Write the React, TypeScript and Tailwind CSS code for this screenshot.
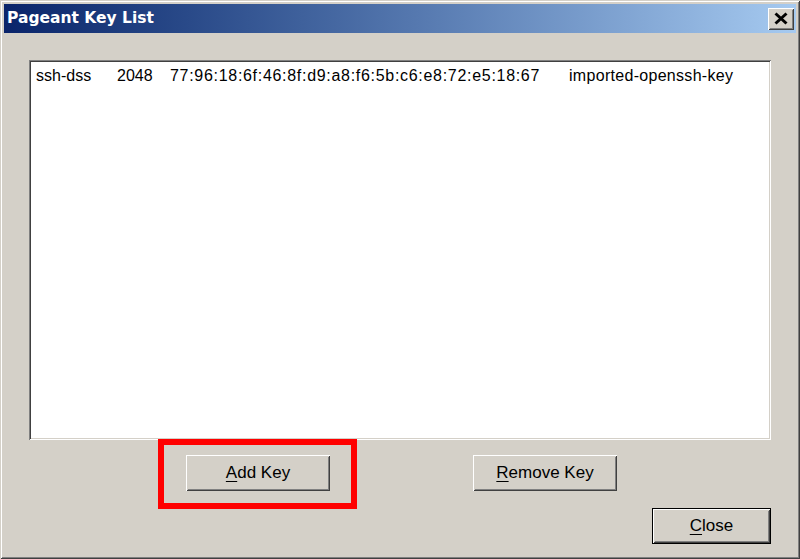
import React from 'react';

const face = '#d4d0c8';

// raised Win2000 bevel
const raised =
  'shadow-[inset_1px_1px_0_#ffffff,inset_-1px_-1px_0_#404040,inset_2px_2px_0_#d4d0c8,inset_-2px_-2px_0_#808080]';

const Btn: React.FC<{ label: string; hot: number; w: string; isDefault?: boolean }> = ({ label, hot, w, isDefault }) => (
  <button
    className={`${w} h-[36px] bg-[#d4d0c8] text-black text-[17px] flex items-center justify-center ${
      isDefault ? 'border border-black' : ''
    }`}
  >
    <span className={`w-full h-full flex items-center justify-center ${raised}`}>
      <span>
        {label.slice(0, hot)}
        <span className="underline underline-offset-[3px] decoration-1">{label[hot]}</span>
        {label.slice(hot + 1)}
      </span>
    </span>
  </button>
);

const App: React.FC = () => {
  return (
    <div
      className="w-[800px] h-[559px] bg-[#d4d0c8] flex flex-col p-[4px] shadow-[inset_1px_1px_0_#d4d0c8,inset_-1px_-1px_0_#404040,inset_2px_2px_0_#ffffff,inset_-2px_-2px_0_#808080] overflow-hidden"
      style={{ fontFamily: '"Liberation Sans", Arial, sans-serif', backgroundColor: face }}
    >
      {/* Title bar */}
      <div className="h-[29px] flex items-center justify-between pl-[3px] pr-[2px] bg-gradient-to-r from-[#0a246a] to-[#a6caf0]">
        <span
          className="text-white font-bold text-[15.5px] leading-none"
          style={{ fontFamily: '"DejaVu Sans", Verdana, sans-serif' }}
        >
          Pageant Key List
        </span>
        <button className={`w-[26px] h-[22px] shrink-0 bg-[#d4d0c8] flex items-center justify-center ${raised}`}>
          <svg width="16" height="13" viewBox="0 0 16 13">
            <path d="M2.5 1.5 L13.5 11.5 M13.5 1.5 L2.5 11.5" stroke="#000" strokeWidth="3" />
          </svg>
        </button>
      </div>

      {/* Body */}
      <div className="flex-1 flex flex-col px-[25px] pt-[27px]">
        {/* Key list */}
        <div className="h-[380px] bg-white shadow-[inset_1px_1px_0_#808080,inset_-1px_-1px_0_#ffffff,inset_2px_2px_0_#404040,inset_-2px_-2px_0_#d4d0c8] p-[2px]">
          <div className="flex pl-[5px] pt-[4px] text-[16px] leading-[20px] text-black whitespace-nowrap">
            <span className="w-[81px]">ssh-dss</span>
            <span className="w-[53px]">2048</span>
            <span className="w-[399px] tracking-[0.7px]">77:96:18:6f:46:8f:d9:a8:f6:5b:c6:e8:72:e5:18:67</span>
            <span className="tracking-[0.3px]">imported-openssh-key</span>
          </div>
        </div>

        {/* Add / Remove */}
        <div className="flex mt-[15px] pl-[157px] gap-[143px]">
          <div className="relative">
            <Btn label="Add Key" hot={0} w="w-[144px]" />
            <div className="absolute left-[-28px] top-[-16px] right-[-27px] bottom-[-18px] border-[6px] border-[#ff0000] pointer-events-none" />
          </div>
          <Btn label="Remove Key" hot={0} w="w-[144px]" />
        </div>

        {/* Close */}
        <div className="flex justify-end mt-[17px]">
          <Btn label="Close" hot={0} w="w-[119px]" isDefault />
        </div>
      </div>
    </div>
  );
};

export default App;
